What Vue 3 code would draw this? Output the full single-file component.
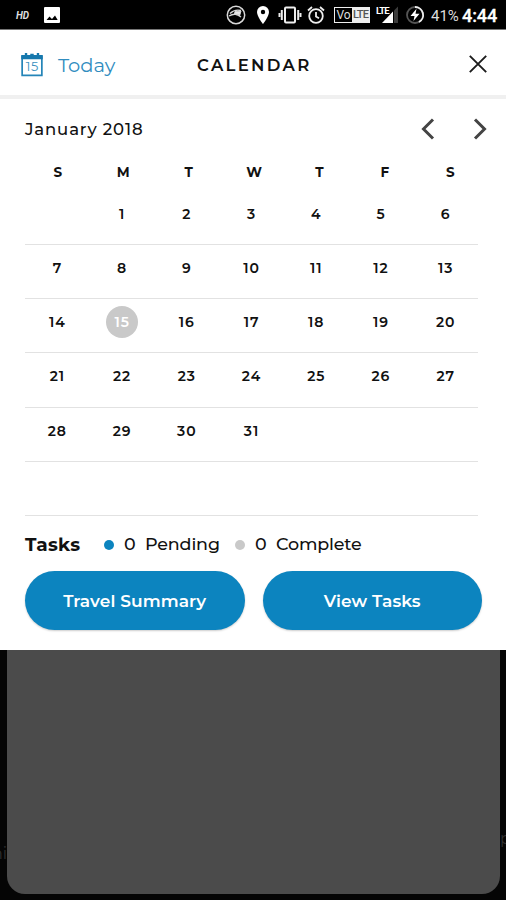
<script setup>
const weekdays = ['S', 'M', 'T', 'W', 'T', 'F', 'S']
const weeks = [
  ['', 1, 2, 3, 4, 5, 6],
  [7, 8, 9, 10, 11, 12, 13],
  [14, 15, 16, 17, 18, 19, 20],
  [21, 22, 23, 24, 25, 26, 27],
  [28, 29, 30, 31, '', '', ''],
  ['', '', '', '', '', '', ''],
]
const today = 15
</script>

<template>
  <div class="screen">
    <div class="status">
      <span class="hd">HD</span>
      <svg class="photo" width="16" height="16" viewBox="0 0 16 16"><rect width="16" height="16" rx="1" fill="#fff" /><path d="M2.5 13 5.5 9.5 8 12 11 8.5 13.7 13z" fill="#000" /></svg>
      <svg class="globe" width="20" height="20" viewBox="0 0 20 20" fill="none" stroke="#d8d8d8"><circle cx="10" cy="10" r="8.7" stroke-width="1.5" /><path d="M4 8.500c3-3 7-4 11-3M3 11c5-3 8-2 12 1" stroke-width="1.400" /><path d="M9 6.500l6-.5-1.500 5c-1.500-2-3-2-5-2z" fill="#e8e8e8" /></svg>
      <svg class="pin" width="12" height="18" viewBox="0 0 12 18"><path fill="#fff" fill-rule="evenodd" d="M6 0a6 6 0 0 0-6 6c0 4.5 6 12 6 12s6-7.500 6-12a6 6 0 0 0-6-6zm0 3.800a2.200 2.200 0 1 1 0 4.400 2.200 2.200 0 0 1 0-4.400z" /></svg>
      <svg class="vibrate" width="24" height="18" viewBox="0 0 24 18" fill="none" stroke="#eee" stroke-width="2"><rect x="7" y="1.500" width="10" height="15" rx="1" /><path d="M3.800 4v10M20.200 4v10" /><path d="M1.500 7v4M22.500 7v4" /></svg>
      <svg class="alarm" width="18" height="18" viewBox="0 0 18 18" fill="none" stroke="#eee" stroke-width="1.800"><circle cx="9" cy="10" r="6.800" /><path d="M1 4.500 5 1M17 4.500 13 1M9 6v4.500l3 1.800" /></svg>
      <span class="volte"><b>Vo</b><i>LTE</i></span>
      <span class="signal">
        <span class="lte">LTE</span>
        <svg width="24" height="18" viewBox="0 0 24 18"><path d="M6 17 17 5.500V17z" fill="#fff" /><path d="M18 4.500 22 .500V17h-4z" fill="#3c3c3c" /></svg>
      </span>
      <svg class="charge" width="20" height="20" viewBox="0 0 20 20" fill="none"><circle cx="10" cy="10" r="8" stroke="#555" stroke-width="1.800" /><path d="M10 2a8 8 0 0 1 4 15" stroke="#eee" stroke-width="1.800" /><path d="M11.500 3.800 5.500 11h4L8.500 16l6-7.200h-4z" fill="#fff" /></svg>
      <span class="pct">41%</span>
      <span class="clock">4:44</span>
    </div>
    <div class="panel">
      <header class="header">
        <svg class="cal" width="23" height="25" viewBox="0 0 23 25"><path d="M1.200 3v20.800h20.600V3" fill="none" stroke="#2585b8" stroke-width="1.800" /><path d="M.3 2.500H4V.5h2.500v2h3.200V1.300h3.600v1.200h3.200v-2H19v2h3.700V7H.3z" fill="#1678ad" /><text x="11.800" y="18.900" text-anchor="middle" class="cal-day">15</text></svg>
        <span class="today">Today</span>
        <h1 class="title">CALENDAR</h1>
        <svg class="close" width="20" height="20" viewBox="0 0 20 20"><path d="M1.800 1.800 18.200 18.200M18.200 1.800 1.800 18.200" stroke="#1c1c1c" stroke-width="1.900" /></svg>
      </header>
      <div class="month">
        <span class="month-name">January 2018</span>
        <svg width="14" height="22" viewBox="0 0 14 22"><path d="M12 1.500 2.500 11 12 20.500" fill="none" stroke="#444" stroke-width="3" /></svg>
        <svg class="next" width="14" height="22" viewBox="0 0 14 22"><path d="M2 1.500 11.500 11 2 20.500" fill="none" stroke="#444" stroke-width="3" /></svg>
      </div>
      <div class="weekdays"><span v-for="(d, i) in weekdays" :key="i">{{ d }}</span></div>
      <div class="weeks">
        <div v-for="(w, i) in weeks" :key="i" class="week">
          <div v-for="(n, j) in w" :key="j" class="cell"><span class="num" :class="{ selected: n === today }">{{ n }}</span></div>
        </div>
      </div>
      <div class="tasks">
        <strong>Tasks</strong>
        <span class="dot blue"></span><span class="count">0</span><span class="pending">Pending</span>
        <span class="dot grey"></span><span class="count">0</span><span class="complete">Complete</span>
      </div>
      <div class="actions">
        <button class="travel">Travel Summary</button>
        <button class="view">View Tasks</button>
      </div>
    </div>
    <div class="backdrop">
      <span class="edge left">ni</span>
      <div class="card"></div>
      <span class="edge right">p</span>
    </div>
  </div>
</template>

<style>
body { margin: 0; }
</style>
<style scoped>
.screen { width: 506px; height: 900px; overflow: hidden; display: flex; flex-direction: column; background: #050505; font-family: Montserrat, Inter, sans-serif; color: #111; }
.screen * { box-sizing: border-box; }
svg { display: block; flex: none; }
.status { height: 30px; flex: none; display: flex; align-items: center; background: #000; border-bottom: 1px solid #777; color: #fff; padding: 1px 0 0 16px; white-space: nowrap; font-family: Roboto, sans-serif; }
.hd { width: 28px; font-size: 10px; font-weight: 700; font-style: italic; color: #ddd; }
.globe { margin-left: 166px; }
.pin { margin-left: 11px; }
.vibrate { margin-left: 9px; }
.alarm { margin-left: 5px; }
.volte { display: flex; width: 36px; height: 16px; margin-left: 9px; border: 1px solid #eee; font-size: 12px; line-height: 14px; }
.volte b { width: 17px; text-align: center; font-weight: 400; color: #ddd; }
.volte i { flex: 1; background: #eee; color: #555; font-style: normal; font-size: 11px; font-weight: 500; text-align: center; letter-spacing: -.8px; }
.signal { position: relative; margin-left: 6px; }
.lte { position: absolute; left: 0; top: 0; font-size: 9.500px; line-height: 9px; font-weight: 700; letter-spacing: -.8px; }
.charge { margin-left: 5px; }
.pct { width: 31px; margin-left: 6px; font-size: 15px; color: #ddd; padding-top: 1px; }
.clock { font-size: 18px; font-weight: 500; letter-spacing: -.1px; padding-top: 1px; -webkit-text-stroke: .3px #fff; }
.panel { height: 620px; flex: none; background: #fff; display: flex; flex-direction: column; }
.header { height: 69px; flex: none; display: flex; align-items: center; padding: 4px 0 0 20px; border-bottom: 4px solid #f0f0f0; }
.cal { width: 22px; margin: 0 0 0 1px; }
.cal-day { font-size: 13.500px; letter-spacing: .6px; fill: #3b91bf; }
.today { width: 140px; margin-left: 15px; font-size: 19.500px; letter-spacing: 0; color: #318dbf; line-height: 24px; padding-top: 1px; }
.title { width: 270px; margin: 0 0 0 -1px; font-size: 16.500px; font-weight: 600; letter-spacing: 2.300px; line-height: 22px; }
.close { margin: -1px 0 0 1px; }
.month { height: 60px; flex: none; display: flex; align-items: center; padding-left: 25px; }
.month-name { width: 396px; font-size: 16.500px; font-weight: 500; letter-spacing: .85px; line-height: 20px; }
.next { margin-left: 38px; }
.weekdays { width: 458px; height: 31.500px; flex: none; margin-left: 25px; display: grid; grid-template-columns: repeat(7, 1fr); font-size: 13.500px; line-height: 26px; font-weight: 700; text-align: center; }
.weeks { width: 453px; height: 325.500px; flex: none; margin-left: 25px; display: grid; grid-template-rows: repeat(6, 1fr); }
.week { display: grid; grid-template-columns: repeat(7, 1fr); border-bottom: 1px solid #e2e2e2; }
.cell { display: flex; justify-content: center; padding-top: 7px; }
.num { width: 33px; height: 32px; text-align: center; font-size: 14px; font-weight: 600; line-height: 32px; letter-spacing: .9px; }
.selected { width: 32px; border-radius: 50%; background: #c9c9c9; color: #fff; }
.tasks { height: 55px; flex: none; display: flex; align-items: center; padding: 0 0 1px 25px; font-size: 17.500px; font-weight: 500; white-space: nowrap; }
.tasks strong { width: 79px; font-size: 18.500px; letter-spacing: .3px; padding-top: 3px; }
.dot { width: 10px; height: 10px; border-radius: 50%; margin-top: 3px; }
.blue { background: #0c84bf; }
.grey { background: #c9c9c9; }
.count { width: 21px; margin-left: 10px; }
.pending { width: 90px; letter-spacing: -.15px; }
.complete { letter-spacing: -.15px; }
.actions { display: flex; gap: 18px; padding-left: 25px; }
button { width: 219.500px; height: 59px; padding: 1px 0 0; border: 0; border-radius: 30px; background: #0c84bf; color: #fff; font: 600 17px Montserrat, Inter, sans-serif; letter-spacing: .1px; box-shadow: 0 1px 2px #0003; }
.backdrop { position: relative; flex: 1; display: flex; padding: 0 6px 6px 7px; background: #050505; overflow: hidden; }
.card { flex: 1; background: #4b4b4b; border-radius: 0 0 18px 18px; }
.edge { position: absolute; font-size: 16px; line-height: 18px; color: #303030; }
.left { left: -8px; top: 195px; }
.right { left: 500px; top: 180px; }
</style>
